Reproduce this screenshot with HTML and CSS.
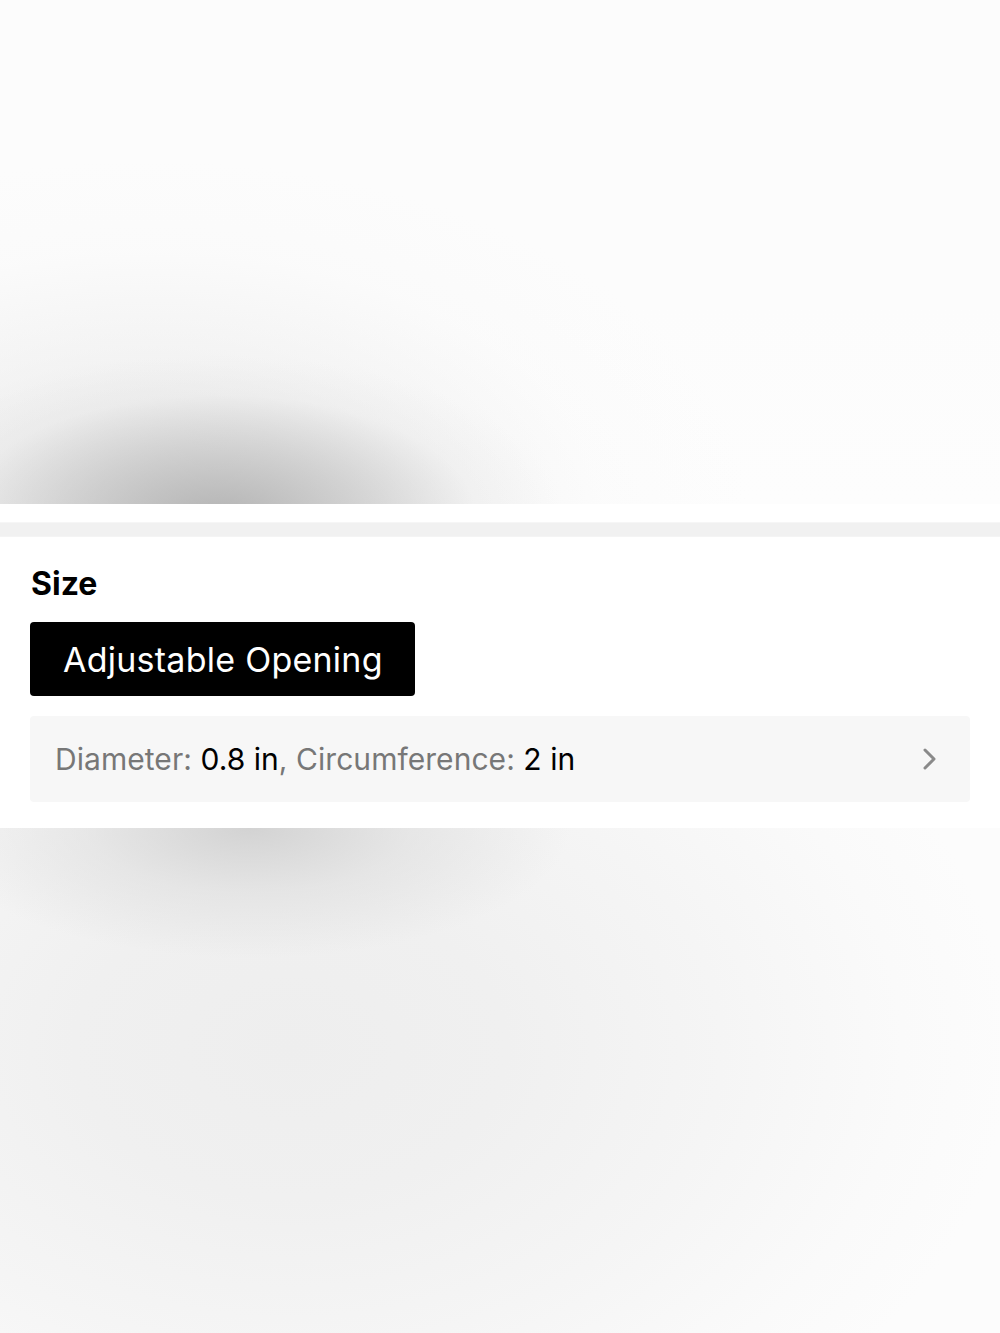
FILE: index.html
```html
<!DOCTYPE html>
<html lang="en">
<head>
<meta charset="utf-8">
<title>Size</title>
<link rel="stylesheet" href="styles.css">
</head>
<body>
<div class="page">
  <div class="hero"></div>
  <div class="gap-white"></div>
  <div class="divider"></div>
  <section class="panel">
    <h2 class="panel-title">Size</h2>
    <div class="options">
      <button class="option option-active" type="button">Adjustable Opening</button>
    </div>
    <div class="info-row">
      <p class="info-text"><span class="muted">Diameter: </span>0.8 in<span class="muted">, Circumference: </span>2 in</p>
      <svg class="chevron" width="16" height="24" viewBox="0 0 16 24" aria-hidden="true">
        <path d="M3 3 L12 12 L3 21" fill="none" stroke="#8a8a8a" stroke-width="3" stroke-linecap="round" stroke-linejoin="round"/>
      </svg>
    </div>
  </section>
  <div class="backdrop"></div>
</div>
</body>
</html>
```
FILE: styles.css
```css
* { box-sizing: border-box; }
html, body { margin: 0; padding: 0; background: #ffffff; }
body { font-family: Inter, "Noto Sans", "Liberation Sans", sans-serif; color: #000; }

.page {
  display: flex;
  flex-direction: column;
  min-height: 1333px;
}

.hero {
  height: 504px;
  background:
    radial-gradient(ellipse 340px 160px at 220px 515px, rgba(175,175,175,0.9) 0%, rgba(190,190,190,0.6) 40%, rgba(225,225,225,0.25) 75%, rgba(255,255,255,0) 100%),
    radial-gradient(ellipse 600px 360px at 150px 520px, rgba(215,215,215,0.7) 0%, rgba(232,232,232,0.45) 45%, rgba(245,245,245,0.2) 75%, rgba(255,255,255,0) 100%),
    linear-gradient(180deg, #fcfcfc 0%, #fcfcfc 60%, #fdfdfd 100%);
}

.gap-white { height: 18px; background: #ffffff; }

.divider {
  height: 15px;
  background: #f1f1f1;
  border-top: 1px solid #f6f6f6;
  border-bottom: 1px solid #f4f4f4;
}

.panel {
  background: #ffffff;
  padding: 29px 30px 26px;
  display: flex;
  flex-direction: column;
  gap: 20px;
}

.panel-title {
  margin: 0;
  font-size: 32px;
  line-height: 36px;
  font-weight: 700;
  padding-left: 1px;
}

.options { display: flex; }

.option {
  font-family: inherit;
  border: none;
  border-radius: 4px;
  height: 74px;
  padding: 0 32px 0 33px;
  font-size: 34px;
  letter-spacing: 0.25px;
  font-weight: 400;
  cursor: pointer;
}
.option-active { background: #000; color: #fff; }

.info-row {
  height: 86px;
  background: #f7f7f7;
  border-radius: 4px;
  display: flex;
  align-items: center;
  justify-content: space-between;
  padding: 0 32px 0 25px;
}

.info-text {
  margin: 0;
  font-size: 30px;
  letter-spacing: 0.05px;
  line-height: 36px;
  color: #000;
}
.muted { color: #777777; }

.chevron { display: block; }

.backdrop {
  flex: 1;
  background:
    radial-gradient(ellipse 320px 130px at 250px 0px, rgba(205,205,205,0.85) 0%, rgba(218,218,218,0.5) 50%, rgba(255,255,255,0) 100%),
    radial-gradient(ellipse 720px 500px at 290px 220px, #eeeeee 0%, #f0f0f0 30%, #f5f5f5 60%, #fafafa 85%, #fcfcfc 100%);
  background-repeat: no-repeat;
  background-color: #fcfcfc;
}
```
